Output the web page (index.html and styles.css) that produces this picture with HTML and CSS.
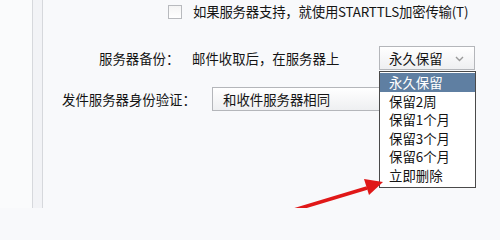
FILE: index.html
```html
<!DOCTYPE html>
<html lang="zh-CN">
<head>
<meta charset="utf-8">
<link rel="stylesheet" href="styles.css">
</head>
<body>
<div class="page">
  <div class="sidebar"></div>
  <div class="divider"></div>
  <div class="main">
    <div class="row row-check">
      <span class="checkbox"></span>
      <span class="check-label">如果服务器支持，就使用STARTTLS加密传输(T)</span>
    </div>
    <div class="row row-backup">
      <span class="label">服务器备份：</span>
      <span class="value">邮件收取后，在服务器上</span>
      <div class="select select-keep">
        <span>永久保留</span>
        <svg class="chev" width="9" height="6" viewBox="0 0 9 6"><path d="M1 1 L4.5 4.5 L8 1" fill="none" stroke="#9a9a9a" stroke-width="1.4"/></svg>
        <ul class="menu">
          <li class="active">永久保留</li>
          <li>保留2周</li>
          <li>保留1个月</li>
          <li>保留3个月</li>
          <li>保留6个月</li>
          <li>立即删除</li>
        </ul>
      </div>
    </div>
    <div class="row row-auth">
      <span class="label">发件服务器身份验证：</span>
      <div class="select select-auth"><span>和收件服务器相同</span></div>
    </div>
  </div>
</div>
<svg class="arrow" width="500" height="208" viewBox="0 0 500 208">
  <line x1="284" y1="213" x2="367" y2="188" stroke="#e01818" stroke-width="3.6"/>
  <polygon points="383,182 364,179 369,195" fill="#e01818"/>
</svg>
</body>
</html>
```

FILE: styles.css
```css
html {
  background: #f8f9fb;
}
html, body {
  margin: 0;
  padding: 0;
}
body {
  width: 500px;
  height: 208px;
  overflow: hidden;
  position: relative;
  background: #fbfbfc;
  font-family: "Noto Sans CJK SC", "Noto Sans", sans-serif;
  font-size: 13.4px;
  color: #141414;
}
.page {
  display: flex;
  height: 208px;
}
.sidebar {
  width: 32px;
  background: #fafbfc;
}
.divider {
  width: 9px;
  background: #f2f3f6;
  border-left: 1px solid #d6d8dc;
  border-right: 1px solid #d6d8dc;
}
.main {
  flex: 1;
  background: #f8f9fb;
  display: flex;
  flex-direction: column;
}
.row {
  display: flex;
  align-items: center;
}
.row-check {
  margin-top: 4px;
  padding-left: 125px;
  height: 15px;
}
.checkbox {
  width: 12px;
  height: 12px;
  border: 1px solid #b8babe;
  background: linear-gradient(#f4f4f4, #ffffff);
  margin-right: 11px;
}
.check-label {
  line-height: 15px;
  letter-spacing: -0.2px;
}
.row-backup {
  margin-top: 27px;
  padding-left: 56px;
  height: 24px;
}
.row-backup .label {
  width: 93px;
}
.row-backup .value {
  width: 187px;
}
.select {
  position: relative;
  box-sizing: border-box;
  height: 24px;
  border: 1px solid #b4b6ba;
  background: linear-gradient(#ffffff, #eeeff1);
  display: flex;
  align-items: center;
  padding-left: 9px;
}
.select-keep {
  width: 96px;
}
.chev {
  position: absolute;
  right: 10px;
  top: 9px;
}
.menu {
  position: absolute;
  left: -1px;
  top: 24px;
  width: 97px;
  box-sizing: border-box;
  margin: 0;
  padding: 1px 0 2px;
  list-style: none;
  background: #ffffff;
  border: 1px solid #4a4a4a;
  z-index: 2;
}
.menu li {
  height: 18.6px;
  line-height: 18.6px;
  padding-left: 9px;
  color: #141414;
}
.menu li.active {
  background: #5f7fa2;
  color: #ffffff;
}
.row-auth {
  margin-top: 17px;
  padding-left: 19px;
  height: 24px;
}
.row-auth .label {
  width: 150px;
}
.select-auth {
  width: 210px;
  padding-left: 10px;
}
.arrow {
  position: absolute;
  left: 0;
  top: 0;
  z-index: 3;
}
```
